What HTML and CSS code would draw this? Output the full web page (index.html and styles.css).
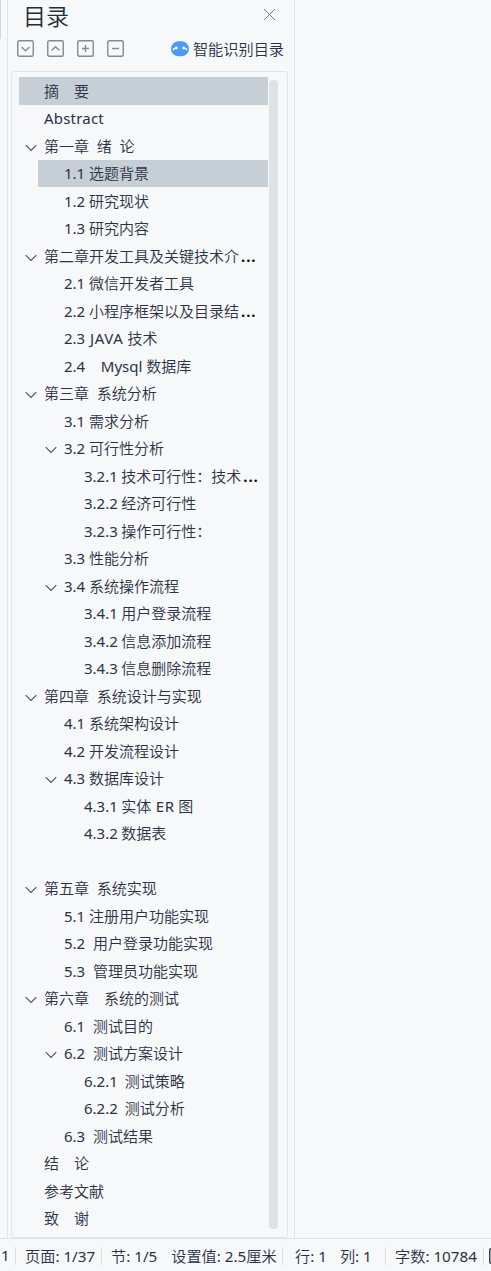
FILE: index.html
```html
<!DOCTYPE html>
<html lang="zh-CN">
<head>
    <meta charset="UTF-8">
    <meta name="viewport" content="width=device-width, initial-scale=1.0">
    <title>目录</title>
    <link rel="stylesheet" href="styles.css">
</head>
<body>
    <svg width="0" height="0" class="defs">
        <symbol id="chevron" viewBox="0 0 12 8">
            <path d="M0.7 1.2 L6 6.5 L11.3 1.2" fill="none" stroke="#4a5264" stroke-width="1.1"/>
        </symbol>
    </svg>

    <div class="workspace">
        <div class="left-edge"></div>
        <div class="panel">
            <div class="panel-header">
                <h2>目录</h2>
                <svg class="close" width="13" height="13" viewBox="0 0 13 13">
                    <path d="M1 1 L12 12 M12 1 L1 12" stroke="#777d8c" stroke-width="1"/>
                </svg>
            </div>

            <div class="toolbar">
                <svg class="tool" viewBox="0 0 17 17"><rect x="0.75" y="0.75" width="15.5" height="15.5" rx="1.5"/><path d="M4.5 7 L8.5 10.7 L12.5 7"/></svg>
                <svg class="tool" viewBox="0 0 17 17"><rect x="0.75" y="0.75" width="15.5" height="15.5" rx="1.5"/><path d="M4.5 10.5 L8.5 6.8 L12.5 10.5"/></svg>
                <svg class="tool" viewBox="0 0 17 17"><rect x="0.75" y="0.75" width="15.5" height="15.5" rx="1.5"/><path d="M5 8.5 H12 M8.5 5 V12"/></svg>
                <svg class="tool" viewBox="0 0 17 17"><rect x="0.75" y="0.75" width="15.5" height="15.5" rx="1.5"/><path d="M5 8.5 H12"/></svg>
                <div class="smart">
                    <svg width="18" height="16" viewBox="0 0 18 16">
                        <rect x="0" y="0.3" width="18" height="15" rx="7.5" fill="#4c9af3"/>
                        <path d="M2.6 8.2 L5.2 6.8 M12.8 6.8 L15.4 8.2" stroke="#d5e7fc" stroke-width="1"/>
                        <g fill="#ffffff">
                            <circle cx="2.6" cy="8.2" r="1"/>
                            <circle cx="5.3" cy="6.9" r="1.4"/>
                            <circle cx="12.7" cy="6.9" r="1.4"/>
                            <circle cx="15.4" cy="8.2" r="1"/>
                        </g>
                    </svg>
                    <span>智能识别目录</span>
                </div>
            </div>

            <div class="outline">
                <ul class="tree">
                    <li class="level1 selected">摘　要</li>
                    <li class="level1"><span class="abstract">Abstract</span></li>
                    <li class="level1"><svg class="arrow"><use href="#chevron"/></svg>第一章  绪  论</li>
                    <li class="level2 selected">1.1 选题背景</li>
                    <li class="level2">1.2 研究现状</li>
                    <li class="level2">1.3 研究内容</li>
                    <li class="level1"><svg class="arrow"><use href="#chevron"/></svg>第二章开发工具及关键技术介<b>...</b></li>
                    <li class="level2">2.1 微信开发者工具</li>
                    <li class="level2">2.2 小程序框架以及目录结<b>...</b></li>
                    <li class="level2">2.3 <span class="latin">JAVA</span> 技术</li>
                    <li class="level2">2.4    Mysql 数据库</li>
                    <li class="level1"><svg class="arrow"><use href="#chevron"/></svg>第三章  系统分析</li>
                    <li class="level2">3.1 需求分析</li>
                    <li class="level2"><svg class="arrow"><use href="#chevron"/></svg>3.2 可行性分析</li>
                    <li class="level3">3.2.1 技术可行性：技术<b>...</b></li>
                    <li class="level3">3.2.2 经济可行性</li>
                    <li class="level3">3.2.3 操作可行性：</li>
                    <li class="level2">3.3 性能分析</li>
                    <li class="level2"><svg class="arrow"><use href="#chevron"/></svg>3.4 系统操作流程</li>
                    <li class="level3">3.4.1 用户登录流程</li>
                    <li class="level3">3.4.2 信息添加流程</li>
                    <li class="level3">3.4.3 信息删除流程</li>
                    <li class="level1"><svg class="arrow"><use href="#chevron"/></svg>第四章  系统设计与实现</li>
                    <li class="level2">4.1 系统架构设计</li>
                    <li class="level2">4.2 开发流程设计</li>
                    <li class="level2"><svg class="arrow"><use href="#chevron"/></svg>4.3 数据库设计</li>
                    <li class="level3">4.3.1 实体 <span class="latin">ER</span> 图</li>
                    <li class="level3">4.3.2 数据表</li>
                    <li class="level3"></li>
                    <li class="level1"><svg class="arrow"><use href="#chevron"/></svg>第五章  系统实现</li>
                    <li class="level2">5.1 注册用户功能实现</li>
                    <li class="level2">5.2  用户登录功能实现</li>
                    <li class="level2">5.3  管理员功能实现</li>
                    <li class="level1"><svg class="arrow"><use href="#chevron"/></svg>第六章　系统的测试</li>
                    <li class="level2">6.1  测试目的</li>
                    <li class="level2"><svg class="arrow"><use href="#chevron"/></svg>6.2  测试方案设计</li>
                    <li class="level3">6.2.1  测试策略</li>
                    <li class="level3">6.2.2  测试分析</li>
                    <li class="level2">6.3  测试结果</li>
                    <li class="level1">结　论</li>
                    <li class="level1">参考文献</li>
                    <li class="level1">致　谢</li>
                </ul>
                <div class="scrollbar"></div>
            </div>
        </div>
        <div class="document"></div>
    </div>

    <div class="status-bar">
        <div class="status page-no">1</div>
        <div class="status pages">页面: 1/37</div>
        <div class="status section"><span>节: 1/5</span><span>设置值: 2.5厘米</span></div>
        <div class="status cursor"><span>行: 1</span><span>列: 1</span></div>
        <div class="status words">字数: 10784</div>
        <svg class="check" width="16" height="16" viewBox="0 0 16 16">
            <rect x="0.75" y="0.75" width="14.5" height="14.5" rx="1" fill="none" stroke="#3b4254" stroke-width="1.5"/>
        </svg>
    </div>
</body>
</html>
```
FILE: styles.css
```css
* {
    box-sizing: border-box;
}

body {
    margin: 0;
    height: 1271px;
    display: flex;
    flex-direction: column;
    overflow: hidden;
    background-color: #f6f8fa;
    color: #2b3144;
    font-family: "Noto Sans", "Noto Sans CJK SC DemiLight", "Noto Sans CJK SC", sans-serif;
    font-size: 15px;
}

svg {
    display: block;
    flex: none;
}

.defs {
    display: none;
}

/* Main area above the status bar */
.workspace {
    display: flex;
    height: 1238px;
}

.left-edge {
    width: 1px;
    height: 39px;
    margin-right: 6px;
    background-color: #d3d8e0;
}

.panel {
    display: flex;
    flex-direction: column;
    width: 288px;
    padding: 0 6px 0 3px;
    border-left: 1px solid #e1e4ea;
    border-right: 1px solid #e1e4ea;
}

.document {
    flex: 1;
    background-color: #f7f8fa;
}

/* Panel title */
.panel-header {
    display: flex;
    justify-content: space-between;
    height: 35px;
    padding: 0 12px 0 12px;
}

.panel-header h2 {
    margin: 0;
    font-size: 23px;
    font-weight: 400;
    line-height: 33px;
    color: #262c3c;
}

.close {
    margin-top: 8px;
}

.toolbar {
    display: flex;
    align-items: center;
    gap: 13px;
    height: 36px;
    padding: 0 4px 9px 6px;
}

.tool {
    width: 17px;
    height: 17px;
    fill: none;
    stroke: #858a90;
    stroke-width: 1.4;
}

.smart {
    display: flex;
    align-items: center;
    gap: 4px;
    margin-left: auto;
    line-height: 20px;
    font-size: 15.2px;
    white-space: nowrap;
}

/* Outline tree */
.outline {
    display: flex;
    height: 1167px;
    padding: 5px 0 0 7px;
    border: 1px solid #e1e4ea;
    border-radius: 3px;
}

.tree {
    width: 249px;
    margin: 0;
    padding: 0;
    list-style: none;
}

.tree li {
    display: flex;
    align-items: center;
    height: 27.5px;
    line-height: 28px;
    white-space: pre;
}

.level1 {
    padding-left: 25px;
}

.tree .level2 {
    margin-left: 19px;
    padding-left: 26px;
}

.tree .level3 {
    margin-left: 39px;
    padding-left: 26px;
    word-spacing: -0.4px;
}

.tree .selected {
    background-color: #c6ced6;
}

.arrow {
    width: 12px;
    height: 8px;
    margin: 4px 7px 0 -19px;
}

.abstract {
    letter-spacing: 0.2px;
}

.latin {
    letter-spacing: 0.6px;
    margin-left: 1px;
}

.tree b {
    margin-left: 2px;
    letter-spacing: 0.9px;
    color: #111111;
}

.scrollbar {
    width: 9px;
    height: 1149px;
    margin: 3px 0 0 1px;
    border-radius: 4px;
    background-color: #dee2e5;
}

/* Status bar */
.status-bar {
    display: flex;
    align-items: center;
    height: 33px;
    padding-top: 1px;
    border-top: 1px solid #dfe2e8;
    font-size: 15.2px;
    white-space: nowrap;
}

.status {
    display: flex;
    flex: none;
    align-items: center;
    height: 18px;
    padding: 0 0 2px 9px;
    border-right: 1px solid #dcdfe5;
}

.page-no {
    width: 16px;
    padding-left: 1px;
}

.pages {
    width: 86px;
}

.section {
    width: 181px;
    gap: 14px;
}

.cursor {
    width: 103px;
    padding-left: 12px;
    gap: 13px;
}

.words {
    width: 98px;
}

.check {
    margin-left: 5px;
}
```
